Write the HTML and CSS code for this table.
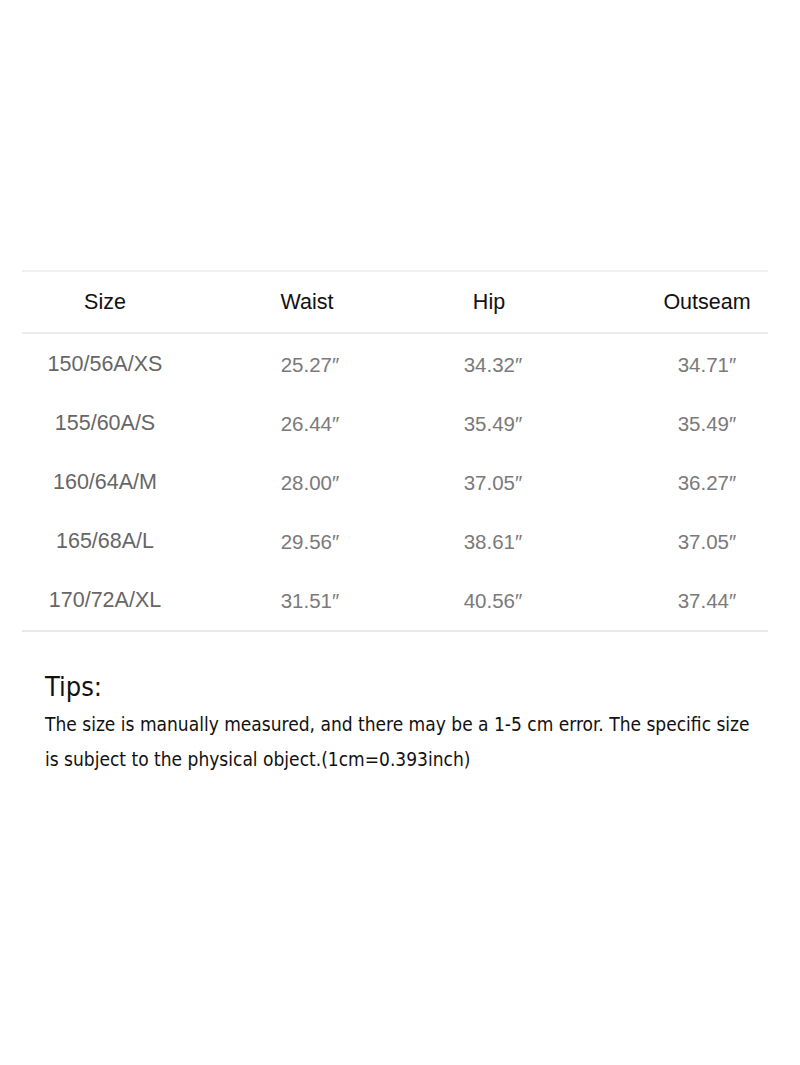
FILE: index.html
```html
<!DOCTYPE html>
<html>
<head>
<meta charset="utf-8">
<link rel="stylesheet" href="styles.css">
</head>
<body>
<div class="page">
  <div class="table">
    <div class="row head">
      <div class="cell c1">Size</div>
      <div class="cell c2">Waist</div>
      <div class="cell c3">Hip</div>
      <div class="cell c4">Outseam</div>
    </div>
    <div class="body">
      <div class="row data">
        <div class="cell c1 size">150/56A/XS</div>
        <div class="cell c2">25.27″</div>
        <div class="cell c3">34.32″</div>
        <div class="cell c4">34.71″</div>
      </div>
      <div class="row data">
        <div class="cell c1 size">155/60A/S</div>
        <div class="cell c2">26.44″</div>
        <div class="cell c3">35.49″</div>
        <div class="cell c4">35.49″</div>
      </div>
      <div class="row data">
        <div class="cell c1 size">160/64A/M</div>
        <div class="cell c2">28.00″</div>
        <div class="cell c3">37.05″</div>
        <div class="cell c4">36.27″</div>
      </div>
      <div class="row data">
        <div class="cell c1 size">165/68A/L</div>
        <div class="cell c2">29.56″</div>
        <div class="cell c3">38.61″</div>
        <div class="cell c4">37.05″</div>
      </div>
      <div class="row data">
        <div class="cell c1 size">170/72A/XL</div>
        <div class="cell c2">31.51″</div>
        <div class="cell c3">40.56″</div>
        <div class="cell c4">37.44″</div>
      </div>
    </div>
  </div>
  <div class="tips">
    <div class="tips-title">Tips:</div>
    <p class="tips-text">The size is manually measured, and there may be a 1-5 cm error. The specific size is subject to the physical object.(1cm=0.393inch)</p>
  </div>
</div>
</body>
</html>
```

FILE: styles.css
```css
html, body {
  margin: 0;
  padding: 0;
  background: #ffffff;
}
.page {
  width: 800px;
  height: 1065px;
  padding-top: 270px;
  box-sizing: border-box;
}
.table {
  margin-left: 22px;
  width: 746px;
  border-top: 2px solid #efefef;
  border-bottom: 2px solid #e9e9e9;
  font-family: "Liberation Sans", Arial, sans-serif;
}
.row {
  display: flex;
  align-items: center;
}
.head {
  height: 60px;
  border-bottom: 2px solid #ececec;
  font-size: 21.5px;
  color: #111;
}
.body {
  padding: 1px 0 0;
}
.data {
  height: 59px;
  font-size: 20.5px;
  color: #7a7a7a;
}
.data .size {
  font-size: 21.5px;
  color: #666;
}
.cell {
  width: 120px;
  text-align: center;
  white-space: nowrap;
}
.c1 { margin-left: 23px; }
.c2 { margin-left: 82px; }
.c3 { margin-left: 62px; }
.c4 { margin-left: 98px; }
.data .c2 { transform: translateX(3px); }
.data .c3 { transform: translateX(4px); }

.tips {
  margin: 35px 0 0 45px;
  width: 720px;
  font-family: "DejaVu Sans Condensed", "DejaVu Sans", sans-serif;
  color: #111;
}
.tips-title {
  font-size: 27px;
  line-height: 40px;
}
.tips-text {
  margin: 0;
  font-size: 19px;
  line-height: 35px;
}
```
